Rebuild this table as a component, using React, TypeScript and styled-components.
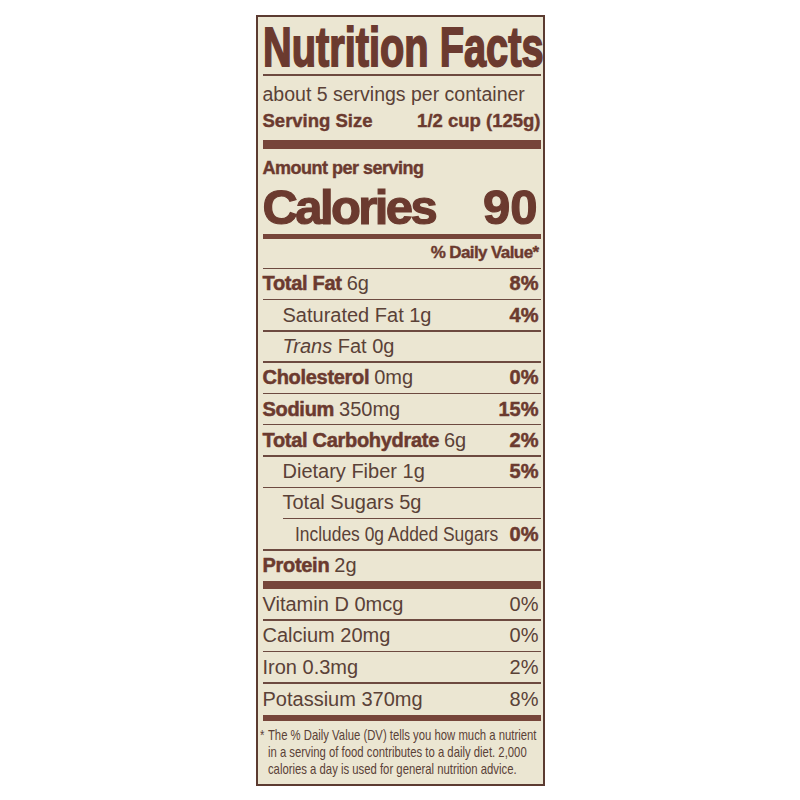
import React from 'react';
import styled, { createGlobalStyle } from 'styled-components';

const BROWN = '#6b3a2f';
const INK = '#5a4137';
const BAR = '#76453a';

const GlobalStyle = createGlobalStyle`
    html, body {
        margin: 0;
        padding: 0;
        background: #ffffff;
    }
    body {
        font-family: "Liberation Sans", Arial, sans-serif;
    }
`;

const Page = styled.div`
    width: 800px;
    height: 800px;
    display: flex;
    align-items: center;
    justify-content: center;
`;

const Label = styled.div`
    box-sizing: border-box;
    width: 289px;
    height: 771px;
    background: #ebe6d2;
    border: 2px solid #5c3b31;
    padding: 0 2px 0 5px;
    display: flex;
    flex-direction: column;
    color: ${INK};
    overflow: hidden;
`;

const Title = styled.h1`
    margin: 0;
    height: 57px;
    font-size: 56px;
    line-height: 59px;
    font-weight: 700;
    color: ${BROWN};
    white-space: nowrap;
    transform: scaleX(0.71);
    transform-origin: 0 50%;
    -webkit-text-stroke: 1.8px ${BROWN};
    flex-shrink: 0;
`;

const Rule = styled.div<{ $size?: number; $inset?: number }>`
    height: ${p => p.$size ?? 1.5}px;
    margin-left: ${p => p.$inset ?? 0}px;
    background: #6d4a40;
    flex-shrink: 0;
`;

const Bar = styled.div<{ $h: number }>`
    height: ${p => p.$h}px;
    background: ${BAR};
    flex-shrink: 0;
`;

const ServingBlock = styled.div`
    padding: 6px 0 6px;
    flex-shrink: 0;
`;

const Line = styled.div<{ $h: number; $bold?: boolean }>`
    height: ${p => p.$h}px;
    display: flex;
    align-items: center;
    justify-content: space-between;
    white-space: nowrap;
    flex-shrink: 0;
    font-size: ${p => (p.$bold ? 18.5 : 19.5)}px;
    font-weight: ${p => (p.$bold ? 700 : 400)};
    color: ${p => (p.$bold ? BROWN : INK)};
    -webkit-text-stroke: ${p => (p.$bold ? `0.4px ${BROWN}` : '0')};
`;

const AmountBlock = styled.div`
    padding-top: 8px;
    flex-shrink: 0;
`;

const Amount = styled.div`
    height: 24px;
    display: flex;
    align-items: center;
    font-size: 18px;
    font-weight: 700;
    letter-spacing: -0.5px;
    color: ${BROWN};
    -webkit-text-stroke: 0.4px ${BROWN};
`;

const CaloriesLine = styled.div`
    height: 53px;
    display: flex;
    align-items: center;
    justify-content: space-between;
    font-size: 49px;
    font-weight: 700;
    color: ${BROWN};
    -webkit-text-stroke: 1.2px ${BROWN};
    padding-right: 3px;
`;

const CaloriesWord = styled.span`
    letter-spacing: -2.6px;
`;

const DailyValue = styled.div`
    height: 29px;
    display: flex;
    align-items: center;
    justify-content: flex-end;
    padding-right: 2px;
    font-size: 17px;
    font-weight: 700;
    letter-spacing: -0.6px;
    color: ${BROWN};
    -webkit-text-stroke: 0.4px ${BROWN};
    flex-shrink: 0;
`;

const NutrientLine = styled.div<{ $h: number; $indent: number }>`
    height: ${p => p.$h}px;
    display: flex;
    align-items: center;
    justify-content: space-between;
    padding-left: ${p => p.$indent}px;
    padding-right: 2px;
    font-size: 20px;
    white-space: nowrap;
    flex-shrink: 0;
`;

const Name = styled.span`
    font-weight: 700;
    letter-spacing: -0.3px;
    color: ${BROWN};
    -webkit-text-stroke: 0.5px ${BROWN};
    margin-right: 5px;
`;

const Amt = styled.span`
    color: ${INK};
`;

// condensed copy for a line that has to fit next to its percentage
const Squeezed = styled.span<{ $width: number; $scale: number }>`
    display: inline-block;
    width: ${p => p.$width}px;
    color: ${INK};
    transform: scaleX(${p => p.$scale});
    transform-origin: 0 50%;
`;

const Pct = styled.span<{ $bold?: boolean }>`
    font-weight: ${p => (p.$bold ? 700 : 400)};
    color: ${p => (p.$bold ? BROWN : INK)};
    -webkit-text-stroke: ${p => (p.$bold ? `0.5px ${BROWN}` : '0')};
`;

const Footnote = styled.div`
    flex: 1;
    margin-left: -3px;
    padding-top: 6px;
`;

const FootnoteText = styled.div`
    padding-left: 10.5px;
    font-size: 15px;
    line-height: 16.75px;
    color: ${INK};
    white-space: nowrap;
    transform: scaleX(0.755);
    transform-origin: 0 0;
`;

const Star = styled.span`
    display: inline-block;
    width: 10.5px;
    margin-left: -10.5px;
`;

interface Nutrient {
    key: string;
    name?: string;
    amount: React.ReactNode;
    dv?: string;
    indent?: number;
    ruleInset?: number;
    squeeze?: boolean;
}

const nutrients: Nutrient[] = [
    { key: 'fat', name: 'Total Fat', amount: '6g', dv: '8%' },
    { key: 'sat', amount: 'Saturated Fat 1g', dv: '4%', indent: 20 },
    {
        key: 'trans',
        amount: (
            <>
                <i>Trans</i> Fat 0g
            </>
        ),
        indent: 20,
    },
    { key: 'chol', name: 'Cholesterol', amount: '0mg', dv: '0%' },
    { key: 'sod', name: 'Sodium', amount: '350mg', dv: '15%' },
    { key: 'carb', name: 'Total Carbohydrate', amount: '6g', dv: '2%' },
    { key: 'fiber', amount: 'Dietary Fiber 1g', dv: '5%', indent: 20 },
    { key: 'sugar', amount: 'Total Sugars 5g', indent: 20, ruleInset: 20 },
    { key: 'added', amount: 'Includes 0g Added Sugars', dv: '0%', indent: 32, squeeze: true },
];

const vitamins = [
    { key: 'd', label: 'Vitamin D 0mcg', dv: '0%' },
    { key: 'ca', label: 'Calcium 20mg', dv: '0%' },
    { key: 'fe', label: 'Iron 0.3mg', dv: '2%' },
    { key: 'k', label: 'Potassium 370mg', dv: '8%' },
];

const App = () => (
    <>
        <GlobalStyle />
        <Page>
            <Label>
                <Title>Nutrition Facts</Title>
                <Rule $size={2} />
                <ServingBlock>
                    <Line $h={26}>about 5 servings per container</Line>
                    <Line $h={26} $bold>
                        <span>Serving Size</span>
                        <span>1/2 cup (125g)</span>
                    </Line>
                </ServingBlock>
                <Bar $h={9} />
                <AmountBlock>
                    <Amount>Amount per serving</Amount>
                    <CaloriesLine>
                        <CaloriesWord>Calories</CaloriesWord>
                        <span>90</span>
                    </CaloriesLine>
                </AmountBlock>
                <Bar $h={5} />
                <DailyValue>% Daily Value*</DailyValue>
                <Rule />
                {nutrients.map(n => (
                    <React.Fragment key={n.key}>
                        <NutrientLine $h={29.8} $indent={n.indent ?? 0}>
                            <span>
                                {n.name && <Name>{n.name}</Name>}
                                {n.squeeze ? (
                                    <Squeezed $width={205} $scale={0.87}>
                                        {n.amount}
                                    </Squeezed>
                                ) : (
                                    <Amt>{n.amount}</Amt>
                                )}
                            </span>
                            {n.dv && <Pct $bold>{n.dv}</Pct>}
                        </NutrientLine>
                        <Rule $inset={n.ruleInset} />
                    </React.Fragment>
                ))}
                <NutrientLine $h={30} $indent={0}>
                    <span>
                        <Name>Protein</Name>
                        <Amt>2g</Amt>
                    </span>
                </NutrientLine>
                <Bar $h={8.5} />
                {vitamins.map((v, index) => (
                    <React.Fragment key={v.key}>
                        <NutrientLine $h={index === vitamins.length - 1 ? 31 : 30} $indent={0}>
                            <Amt>{v.label}</Amt>
                            <Pct>{v.dv}</Pct>
                        </NutrientLine>
                        {index < vitamins.length - 1 && <Rule />}
                    </React.Fragment>
                ))}
                <Bar $h={6.5} />
                <Footnote>
                    <FootnoteText>
                        <Star>*</Star>The % Daily Value (DV) tells you how much a nutrient
                        <br />
                        in a serving of food contributes to a daily diet. 2,000
                        <br />
                        calories a day is used for general nutrition advice.
                    </FootnoteText>
                </Footnote>
            </Label>
        </Page>
    </>
);

export default App;
